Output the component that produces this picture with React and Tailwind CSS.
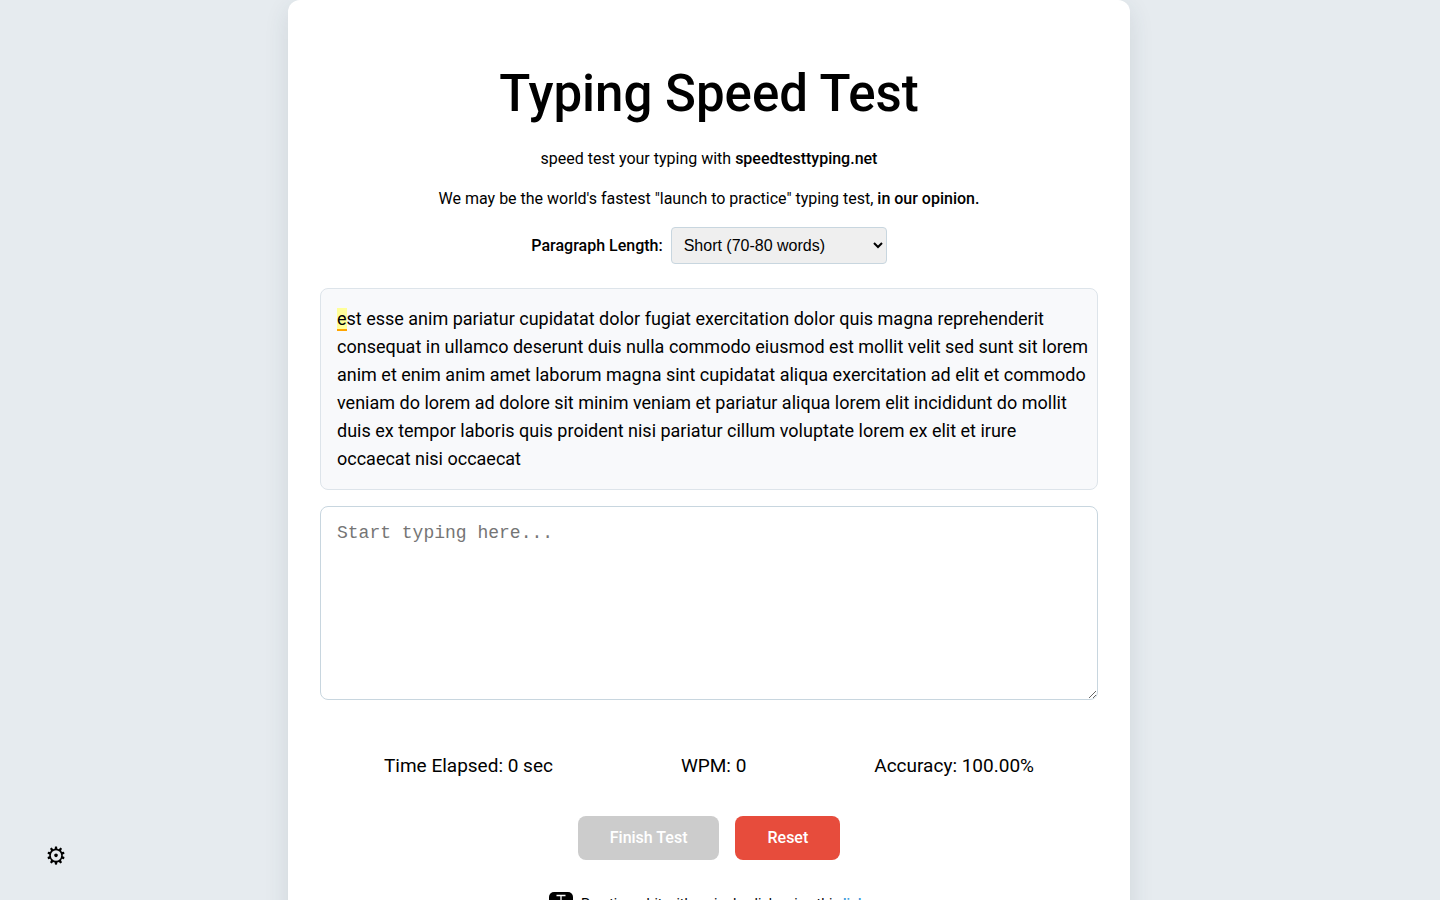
import { useState } from "react";

const PARAGRAPH =
  "est esse anim pariatur cupidatat dolor fugiat exercitation dolor quis magna reprehenderit consequat in ullamco deserunt duis nulla commodo eiusmod est mollit velit sed sunt sit lorem anim et enim anim amet laborum magna sint cupidatat aliqua exercitation ad elit et commodo veniam do lorem ad dolore sit minim veniam et pariatur aliqua lorem elit incididunt do mollit duis ex tempor laboris quis proident nisi pariatur cillum voluptate lorem ex elit et irure occaecat nisi occaecat";

function Header() {
  return (
    <header className="text-center">
      <h1 className="text-[51px] leading-[60px] font-medium">Typing Speed Test</h1>
      <p className="mt-[23px]">
        speed test your typing with <strong className="font-medium">speedtesttyping.net</strong>
      </p>
      <p className="mt-4">
        We may be the world's fastest "launch to practice" typing test,{" "}
        <strong className="font-medium">in our opinion.</strong>
      </p>
    </header>
  );
}

function Passage({ position }) {
  return (
    <div className="mt-6 rounded-lg border border-[#dde4ea] bg-[#f8f9fb] py-4 pr-2 pl-4 text-[18px] leading-7">
      {PARAGRAPH.slice(0, position)}
      <span className="border-b-2 border-[#ffa500] bg-[#ffff99]">{PARAGRAPH[position]}</span>
      {PARAGRAPH.slice(position + 1)}
    </div>
  );
}

export default function App() {
  const [typed, setTyped] = useState("");
  const position = Math.min(typed.length, PARAGRAPH.length - 1);

  return (
    <div className="min-h-screen bg-[#e6ebef] font-[Roboto,sans-serif] text-base text-black">
      <main className="mr-4 ml-[20%] max-w-[842px] rounded-xl bg-white px-8 pt-16 pb-8 shadow-[0_8px_24px_rgba(44,62,80,0.12)]">
        <Header />
        <div className="mt-4 flex items-center justify-center gap-2">
          <label htmlFor="length" className="font-medium">
            Paragraph Length:
          </label>
          <select
            id="length"
            className="h-[37px] w-[216px] rounded border border-[#c8d6df] bg-[#efefef] px-2 font-['Liberation_Sans',Arial,sans-serif]"
          >
            <option>Short (70-80 words)</option>
            <option>Medium (150-160 words)</option>
            <option>Long (250-260 words)</option>
          </select>
        </div>
        <Passage position={position} />
        <textarea
          aria-label="Typing area"
          placeholder="Start typing here..."
          value={typed}
          onChange={(e) => setTyped(e.target.value)}
          className="mt-4 block h-[194px] w-full resize-y rounded-lg border border-[#c8d6df] bg-white p-4 font-['Liberation_Mono',monospace] text-[18px] leading-5 placeholder:text-[#757575]"
        />
        <div className="mt-12 flex justify-around text-[19px] leading-9">
          <div>Time Elapsed: 0 sec</div>
          <div>WPM: 0</div>
          <div>Accuracy: 100.00%</div>
        </div>
        <div className="mt-8 flex justify-center gap-4">
          <button type="button" disabled className="h-11 rounded-lg bg-[#cccccc] px-8 font-medium text-white">
            Finish Test
          </button>
          <button
            type="button"
            onClick={() => setTyped("")}
            className="h-11 rounded-lg bg-[#e74c3c] px-8 font-medium text-white"
          >
            Reset
          </button>
        </div>
        <div className="mt-8 flex items-center justify-center gap-2 text-sm leading-6">
          <svg viewBox="0 0 24 24" className="size-6" aria-hidden="true">
            <rect width="24" height="24" rx="5" fill="#000" />
            <path d="M7.5 3.5h9M12 3.5v14" stroke="#fff" strokeWidth="1.3" fill="none" />
          </svg>
          <span>
            Practice a bit with a single click using this{" "}
            <a href="#practice" className="font-medium text-[#3498db]">
              link
            </a>
            .
          </span>
        </div>
      </main>
      <button
        type="button"
        aria-label="Settings"
        className="fixed bottom-6 left-9 flex size-10 items-center justify-center font-['DejaVu_Sans',sans-serif] text-[24px] leading-none"
      >
        ⚙
      </button>
    </div>
  );
}
